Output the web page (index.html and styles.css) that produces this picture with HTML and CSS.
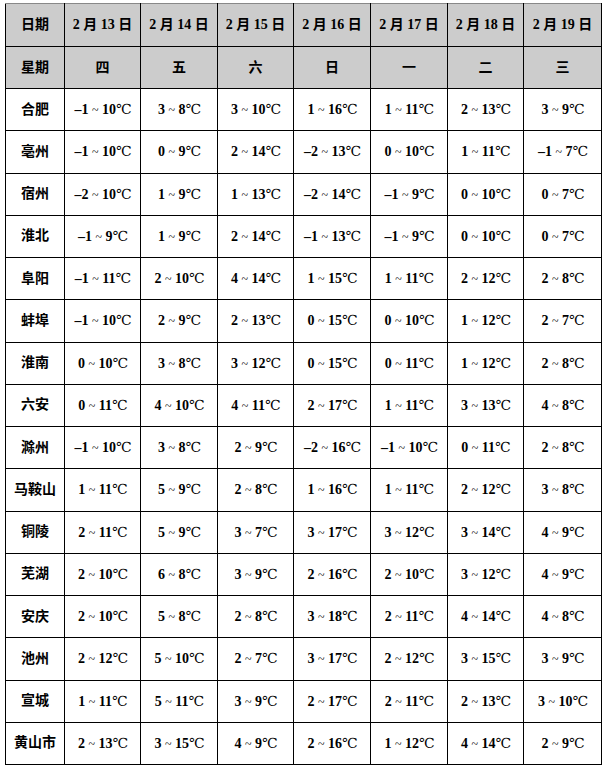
FILE: index.html
```html
<!DOCTYPE html>
<html lang="zh">
<head>
<meta charset="utf-8">
<link rel="stylesheet" href="styles.css">
</head>
<body>
<table class="weather">
<colgroup>
<col class="c-city"><col class="c-a"><col class="c-b"><col class="c-a"><col class="c-b"><col class="c-b"><col class="c-a"><col class="c-c">
</colgroup>
<thead>
<tr class="h1"><th>日期</th><th>2 月 13 日</th><th>2 月 14 日</th><th>2 月 15 日</th><th>2 月 16 日</th><th>2 月 17 日</th><th>2 月 18 日</th><th>2 月 19 日</th></tr>
<tr class="h2"><th>星期</th><th>四</th><th>五</th><th>六</th><th>日</th><th>一</th><th>二</th><th>三</th></tr>
</thead>
<tbody>
<tr><th>合肥</th><td>–1 <i>~</i> 10<u>℃</u></td><td>3 <i>~</i> 8<u>℃</u></td><td>3 <i>~</i> 10<u>℃</u></td><td>1 <i>~</i> 16<u>℃</u></td><td>1 <i>~</i> 11<u>℃</u></td><td>2 <i>~</i> 13<u>℃</u></td><td>3 <i>~</i> 9<u>℃</u></td></tr>
<tr><th>亳州</th><td>–1 <i>~</i> 10<u>℃</u></td><td>0 <i>~</i> 9<u>℃</u></td><td>2 <i>~</i> 14<u>℃</u></td><td>–2 <i>~</i> 13<u>℃</u></td><td>0 <i>~</i> 10<u>℃</u></td><td>1 <i>~</i> 11<u>℃</u></td><td>–1 <i>~</i> 7<u>℃</u></td></tr>
<tr><th>宿州</th><td>–2 <i>~</i> 10<u>℃</u></td><td>1 <i>~</i> 9<u>℃</u></td><td>1 <i>~</i> 13<u>℃</u></td><td>–2 <i>~</i> 14<u>℃</u></td><td>–1 <i>~</i> 9<u>℃</u></td><td>0 <i>~</i> 10<u>℃</u></td><td>0 <i>~</i> 7<u>℃</u></td></tr>
<tr><th>淮北</th><td>–1 <i>~</i> 9<u>℃</u></td><td>1 <i>~</i> 9<u>℃</u></td><td>2 <i>~</i> 14<u>℃</u></td><td>–1 <i>~</i> 13<u>℃</u></td><td>–1 <i>~</i> 9<u>℃</u></td><td>0 <i>~</i> 10<u>℃</u></td><td>0 <i>~</i> 7<u>℃</u></td></tr>
<tr><th>阜阳</th><td>–1 <i>~</i> 11<u>℃</u></td><td>2 <i>~</i> 10<u>℃</u></td><td>4 <i>~</i> 14<u>℃</u></td><td>1 <i>~</i> 15<u>℃</u></td><td>1 <i>~</i> 11<u>℃</u></td><td>2 <i>~</i> 12<u>℃</u></td><td>2 <i>~</i> 8<u>℃</u></td></tr>
<tr><th>蚌埠</th><td>–1 <i>~</i> 10<u>℃</u></td><td>2 <i>~</i> 9<u>℃</u></td><td>2 <i>~</i> 13<u>℃</u></td><td>0 <i>~</i> 15<u>℃</u></td><td>0 <i>~</i> 10<u>℃</u></td><td>1 <i>~</i> 12<u>℃</u></td><td>2 <i>~</i> 7<u>℃</u></td></tr>
<tr><th>淮南</th><td>0 <i>~</i> 10<u>℃</u></td><td>3 <i>~</i> 8<u>℃</u></td><td>3 <i>~</i> 12<u>℃</u></td><td>0 <i>~</i> 15<u>℃</u></td><td>0 <i>~</i> 11<u>℃</u></td><td>1 <i>~</i> 12<u>℃</u></td><td>2 <i>~</i> 8<u>℃</u></td></tr>
<tr><th>六安</th><td>0 <i>~</i> 11<u>℃</u></td><td>4 <i>~</i> 10<u>℃</u></td><td>4 <i>~</i> 11<u>℃</u></td><td>2 <i>~</i> 17<u>℃</u></td><td>1 <i>~</i> 11<u>℃</u></td><td>3 <i>~</i> 13<u>℃</u></td><td>4 <i>~</i> 8<u>℃</u></td></tr>
<tr><th>滁州</th><td>–1 <i>~</i> 10<u>℃</u></td><td>3 <i>~</i> 8<u>℃</u></td><td>2 <i>~</i> 9<u>℃</u></td><td>–2 <i>~</i> 16<u>℃</u></td><td>–1 <i>~</i> 10<u>℃</u></td><td>0 <i>~</i> 11<u>℃</u></td><td>2 <i>~</i> 8<u>℃</u></td></tr>
<tr><th>马鞍山</th><td>1 <i>~</i> 11<u>℃</u></td><td>5 <i>~</i> 9<u>℃</u></td><td>2 <i>~</i> 8<u>℃</u></td><td>1 <i>~</i> 16<u>℃</u></td><td>1 <i>~</i> 11<u>℃</u></td><td>2 <i>~</i> 12<u>℃</u></td><td>3 <i>~</i> 8<u>℃</u></td></tr>
<tr><th>铜陵</th><td>2 <i>~</i> 11<u>℃</u></td><td>5 <i>~</i> 9<u>℃</u></td><td>3 <i>~</i> 7<u>℃</u></td><td>3 <i>~</i> 17<u>℃</u></td><td>3 <i>~</i> 12<u>℃</u></td><td>3 <i>~</i> 14<u>℃</u></td><td>4 <i>~</i> 9<u>℃</u></td></tr>
<tr><th>芜湖</th><td>2 <i>~</i> 10<u>℃</u></td><td>6 <i>~</i> 8<u>℃</u></td><td>3 <i>~</i> 9<u>℃</u></td><td>2 <i>~</i> 16<u>℃</u></td><td>2 <i>~</i> 10<u>℃</u></td><td>3 <i>~</i> 12<u>℃</u></td><td>4 <i>~</i> 9<u>℃</u></td></tr>
<tr><th>安庆</th><td>2 <i>~</i> 10<u>℃</u></td><td>5 <i>~</i> 8<u>℃</u></td><td>2 <i>~</i> 8<u>℃</u></td><td>3 <i>~</i> 18<u>℃</u></td><td>2 <i>~</i> 11<u>℃</u></td><td>4 <i>~</i> 14<u>℃</u></td><td>4 <i>~</i> 8<u>℃</u></td></tr>
<tr><th>池州</th><td>2 <i>~</i> 12<u>℃</u></td><td>5 <i>~</i> 10<u>℃</u></td><td>2 <i>~</i> 7<u>℃</u></td><td>3 <i>~</i> 17<u>℃</u></td><td>2 <i>~</i> 12<u>℃</u></td><td>3 <i>~</i> 15<u>℃</u></td><td>3 <i>~</i> 9<u>℃</u></td></tr>
<tr><th>宣城</th><td>1 <i>~</i> 11<u>℃</u></td><td>5 <i>~</i> 11<u>℃</u></td><td>3 <i>~</i> 9<u>℃</u></td><td>2 <i>~</i> 17<u>℃</u></td><td>2 <i>~</i> 11<u>℃</u></td><td>2 <i>~</i> 13<u>℃</u></td><td>3 <i>~</i> 10<u>℃</u></td></tr>
<tr><th>黄山市</th><td>2 <i>~</i> 13<u>℃</u></td><td>3 <i>~</i> 15<u>℃</u></td><td>4 <i>~</i> 9<u>℃</u></td><td>2 <i>~</i> 16<u>℃</u></td><td>1 <i>~</i> 12<u>℃</u></td><td>4 <i>~</i> 14<u>℃</u></td><td>2 <i>~</i> 9<u>℃</u></td></tr>
</tbody>
</table>
</body>
</html>
```
FILE: styles.css
```css
html, body {
  margin: 0;
  padding: 0;
  background: #fff;
}
body {
  padding: 3px 3px 0 5px;
}
.weather {
  border-collapse: collapse;
  table-layout: fixed;
  width: 596px;
  font-family: "Liberation Serif", "Noto Sans CJK SC", serif;
  font-weight: bold;
  font-size: 14px;
  color: #000;
}
.c-city { width: 59px; }
.c-a { width: 76px; }
.c-b { width: 77px; }
.c-c { width: 78px; }
.weather th, .weather td {
  border: 1px solid #000;
  text-align: center;
  vertical-align: middle;
  padding: 0;
  font-weight: bold;
  white-space: nowrap;
  line-height: 16px;
}
.weather thead th {
  background: #cccccc;
}
.weather tr.h1 {
  height: 43px;
}
.weather tr.h1 th {
  border-top-color: #888;
}
.weather tr.h2 {
  height: 42px;
}
.weather tbody tr {
  height: 42.25px;
}
.weather i {
  font-style: normal;
  font-weight: normal;
  font-size: 12px;
}
.weather u {
  text-decoration: none;
  font-family: "DejaVu Serif", "Noto Sans CJK SC", serif;
  font-weight: normal;
  font-size: 14px;
  letter-spacing: -1px;
}
```
